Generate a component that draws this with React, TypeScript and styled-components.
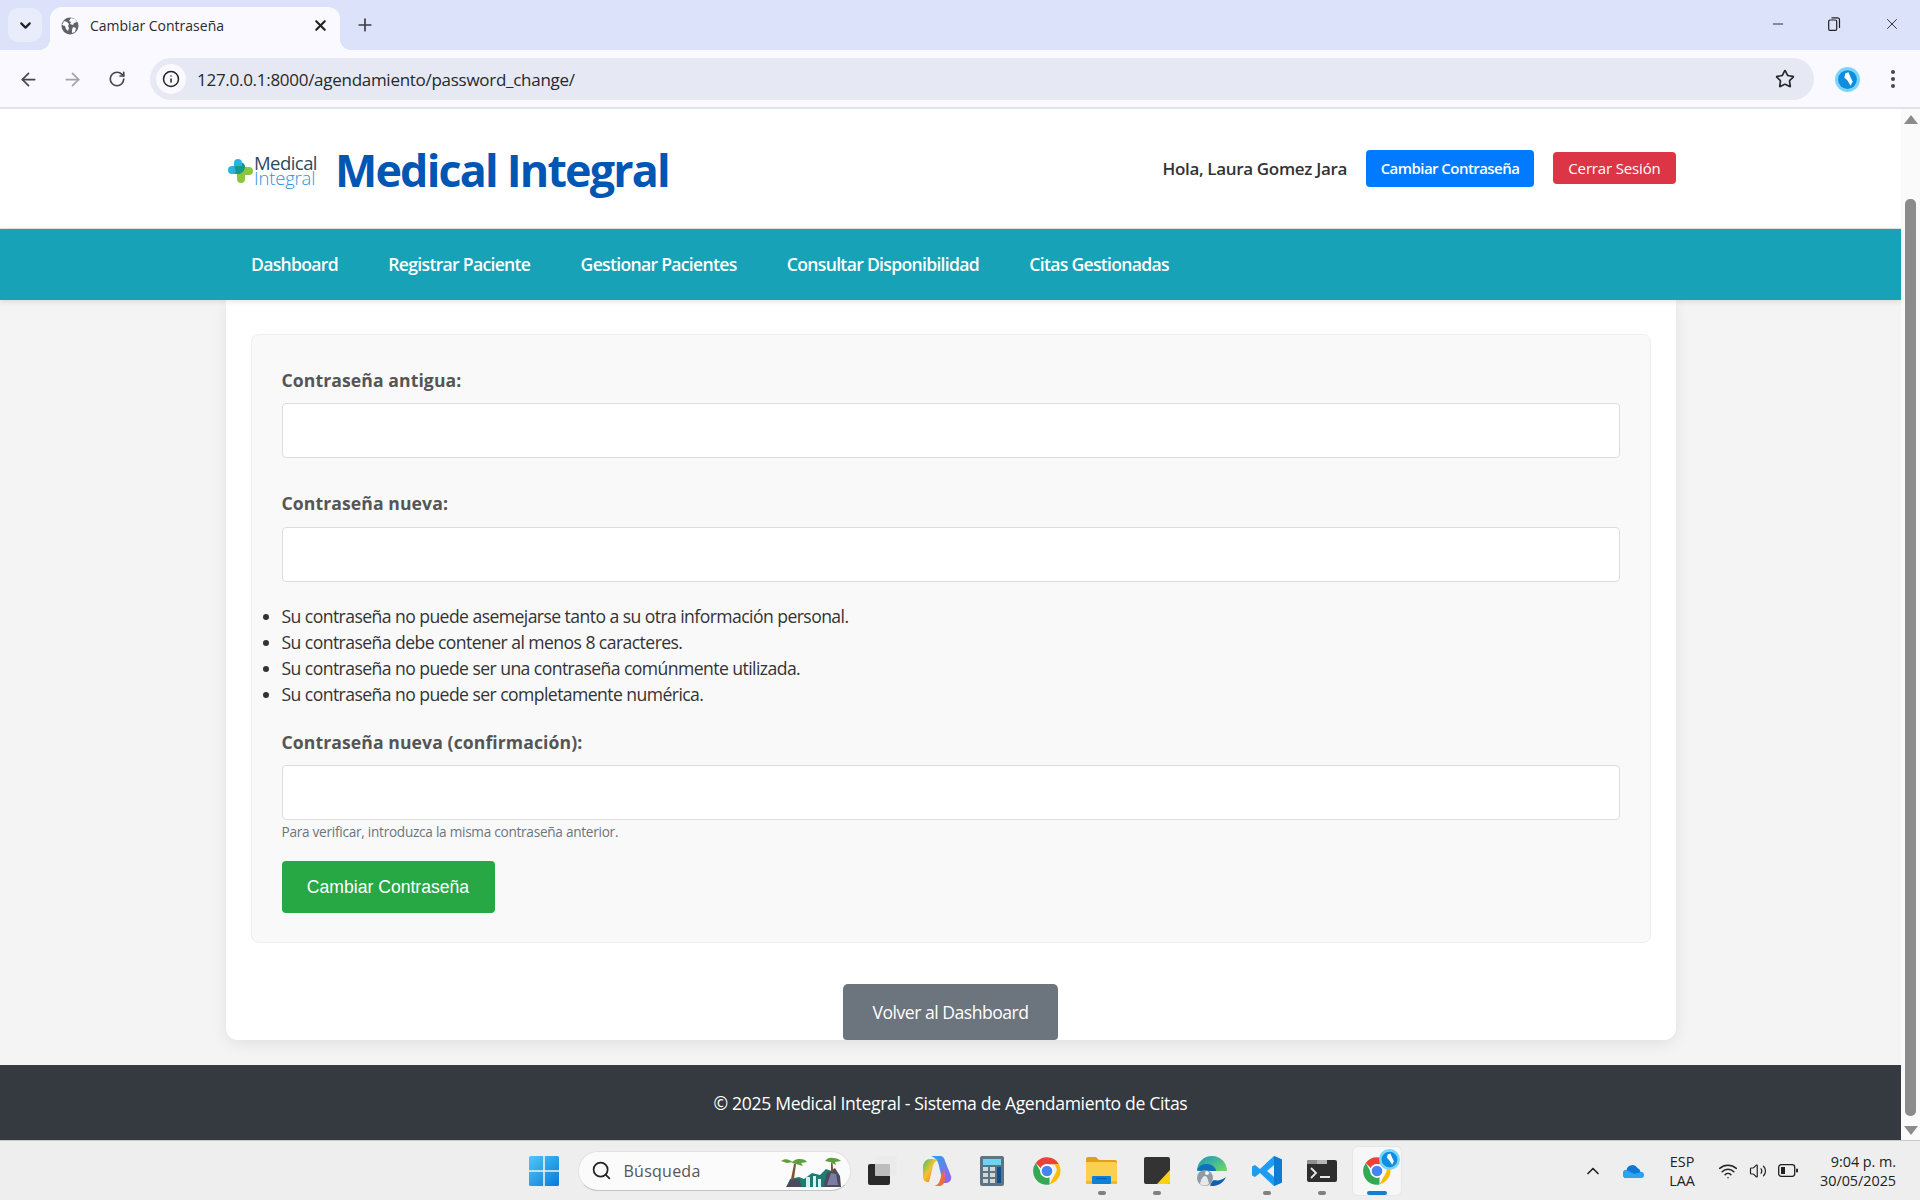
import React from "react";
import styled, { createGlobalStyle } from "styled-components";
import { ArrowLeft, ArrowRight, ChevronDown, ChevronUp, Info, Minus, Plus, RotateCw, Search, Star, Volume2, Wifi, X } from "lucide-react";

const GlobalStyle = createGlobalStyle`
  html, body { margin: 0; padding: 0; height: 100%; overflow: hidden; }
  * { box-sizing: border-box; }
  body { font-family: "Open Sans", "Noto Sans", sans-serif; color: #333; background: #f4f4f4; }
`;

const Frame = styled.div`
  width: 1920px;
  height: 1200px;
  display: flex;
  flex-direction: column;
  overflow: hidden;
`;

const TabStrip = styled.div`
  height: 50px;
  flex-shrink: 0;
  background: #dbe2f9;
  display: flex;
  align-items: flex-end;
  padding-left: 8px;
`;

const TabSearch = styled.div`
  width: 34px;
  height: 34px;
  margin-bottom: 8px;
  margin-right: 8px;
  border-radius: 10px;
  background: #e8ecfb;
  display: flex;
  align-items: center;
  justify-content: center;
  color: #222;
`;

const Tab = styled.div`
  width: 290px;
  height: 43px;
  background: #f9f9ff;
  border-radius: 12px 12px 0 0;
  display: flex;
  align-items: center;
  padding: 0 11px 6px 11px;
  gap: 11px;
  font-size: 14px;
  color: #2b2b2b;
  position: relative;

  &::before,
  &::after {
    content: "";
    position: absolute;
    bottom: 0;
    width: 12px;
    height: 12px;
  }
  &::before {
    left: -12px;
    background: radial-gradient(circle at 0 0, #dbe2f9 12px, #f9f9ff 12.5px);
  }
  &::after {
    right: -12px;
    background: radial-gradient(circle at 100% 0, #dbe2f9 12px, #f9f9ff 12.5px);
  }
`;

const TabTitle = styled.span`
  flex: 1;
`;

const NewTab = styled.div`
  width: 36px;
  height: 36px;
  margin-left: 7px;
  margin-bottom: 7px;
  display: flex;
  align-items: center;
  justify-content: center;
  color: #3a3d45;
`;

const WindowControls = styled.div`
  margin-left: auto;
  height: 50px;
  display: flex;
  align-items: center;
  gap: 42px;
  padding-right: 19px;
  padding-bottom: 2px;
  color: #222;
`;

const Toolbar = styled.div`
  height: 59px;
  flex-shrink: 0;
  background: #f9f9ff;
  border-bottom: 2px solid #dfe3ee;
  display: flex;
  align-items: center;
  padding: 1px 0 0 16px;
  position: relative;
`;

const NavIcon = styled.div<{ $faded?: boolean }>`
  width: 24px;
  height: 24px;
  margin-right: 20.5px;
  display: flex;
  align-items: center;
  justify-content: center;
  color: ${(p) => (p.$faded ? "#a0a3ab" : "#44474e")};
`;

const Omnibox = styled.div`
  width: 1664px;
  height: 42px;
  margin-left: 0.5px;
  border-radius: 21px;
  background: #e6e8f3;
  display: flex;
  align-items: center;
  padding-left: 6px;
  padding-right: 19px;
  font-size: 17px;
  color: #26282d;
  letter-spacing: -0.28px;
`;

const InfoChip = styled.div`
  width: 30px;
  height: 30px;
  border-radius: 50%;
  background: #f9f9ff;
  display: flex;
  align-items: center;
  justify-content: center;
  margin-right: 11px;
  color: #222;
`;

const Url = styled.span`
  flex: 1;
`;

const ToolbarEnd = styled.div`
  display: flex;
  align-items: center;
  gap: 31px;
  margin-left: 21px;
  color: #44474e;
`;

const Viewport = styled.div`
  flex: 1;
  min-height: 0;
  display: flex;
  overflow: hidden;
`;

const Page = styled.div`
  width: 1901px;
  display: flex;
  flex-direction: column;
  background: #f4f4f4;
`;

const Scrollbar = styled.div`
  width: 19px;
  background: #fafafa;
  display: flex;
  flex-direction: column;
  align-items: center;
  padding: 6px 0 5px;
`;

const ScrollThumb = styled.div`
  width: 11px;
  flex: 1;
  margin: 75px 0 10px;
  border-radius: 5px;
  background: #8b8b8b;
`;

const ScrollArrow = styled.div<{ $down?: boolean }>`
  width: 0;
  height: 0;
  border-left: 7px solid transparent;
  border-right: 7px solid transparent;
  ${(p) => (p.$down ? "border-top: 9px solid #8b8b8b;" : "border-bottom: 9px solid #8b8b8b;")}
`;

const Header = styled.header`
  height: 120px;
  flex-shrink: 0;
  background: #fff;
  border-bottom: 1px solid #e5e5e5;
  padding: 0 225px 0 226px;
  display: flex;
  align-items: center;
  justify-content: space-between;
`;

const Brand = styled.div`
  display: flex;
  align-items: center;
  gap: 18px;
  margin-top: 2px;
  margin-left: 2px;
`;

const LogoMark = styled.div`
  display: flex;
  align-items: center;
`;

const LogoText = styled.div`
  font-size: 18.5px;
  line-height: 15px;
  letter-spacing: -0.55px;
  color: #2c4a5e;
  margin-left: 1px;
`;

const LogoSecond = styled.div`
  color: #2f93dd;
  font-weight: 300;
  letter-spacing: -0.2px;
`;

const Title = styled.h1`
  margin: 0;
  font-size: 44.8px;
  font-weight: 700;
  color: #0056b3;
  letter-spacing: -1.8px;
`;

const UserArea = styled.div`
  display: flex;
  align-items: center;
  margin-top: -1px;
`;

const Greeting = styled.span`
  font-size: 17px;
  font-weight: 600;
  color: #333;
  letter-spacing: -0.33px;
  margin-right: 19px;
`;

const SmallButton = styled.a<{ $color: string; $width: number; $height: number; $strong?: boolean }>`
  background: ${(p) => p.$color};
  color: #fff;
  font-size: 15px;
  font-weight: ${(p) => (p.$strong ? 600 : 400)};
  letter-spacing: ${(p) => (p.$strong ? "-0.55px" : "-0.15px")};
  border-radius: 4px;
  width: ${(p) => p.$width}px;
  height: ${(p) => p.$height}px;
  display: flex;
  align-items: center;
  justify-content: center;
  margin-right: 19px;
  &:last-child { margin-right: 0; }
`;

const NavBar = styled.nav`
  height: 71px;
  flex-shrink: 0;
  background: #17a2b8;
  padding: 0 251px 2px;
  display: flex;
  align-items: center;
  gap: 50.3px;
  box-shadow: 0 2px 5px rgba(0, 0, 0, 0.1);
  position: relative;
`;

const NavLink = styled.a`
  color: #fff;
  font-size: 17.6px;
  font-weight: 600;
  letter-spacing: -0.7px;
`;

const Main = styled.main`
  flex: 1;
  min-height: 0;
  display: flex;
  flex-direction: column;
  align-items: center;
  padding-bottom: 25px;
`;

const Card = styled.div`
  width: 1450px;
  flex: 1;
  background: #fff;
  border-radius: 0 0 12px 12px;
  box-shadow: 0 4px 15px rgba(0, 0, 0, 0.08);
  padding: 34px 25px 0;
  display: flex;
  flex-direction: column;
  align-items: center;
`;

const FormPanel = styled.form`
  width: 1400px;
  height: 609px;
  background: #f9f9f9;
  border: 1px solid #eee;
  border-radius: 8px;
  padding: 33px 30px 0;
`;

const Field = styled.div<{ $gap: number }>`
  margin-bottom: ${(p) => p.$gap}px;
`;

const Label = styled.label<{ $after?: number }>`
  display: block;
  font-size: 17.6px;
  font-weight: 700;
  color: #555;
  line-height: 24px;
  margin-bottom: ${(p) => p.$after ?? 11}px;
  letter-spacing: 0.09px;
`;

const Input = styled.input`
  display: block;
  width: 100%;
  height: 55px;
  background: #fff;
  border: 1px solid #ddd;
  border-radius: 4px;
`;

const Hints = styled.ul`
  margin: 0 0 23px;
  padding: 0;
  list-style-position: outside;
  font-size: 17.6px;
  line-height: 26px;
  color: #333;
  letter-spacing: -0.57px;
`;

const Helper = styled.small`
  display: block;
  margin-top: 3px;
  font-size: 13.6px;
  line-height: 18px;
  color: #6c757d;
  letter-spacing: -0.26px;
`;

const SubmitButton = styled.button`
  display: block;
  margin-top: 20px;
  width: 213px;
  height: 52px;
  border: none;
  border-radius: 4px;
  background: #28a745;
  color: #fff;
  font-family: "Liberation Sans", Arial, sans-serif;
  font-size: 17.6px;
`;

const BackButton = styled.a`
  margin-top: auto;
  width: 215px;
  height: 56px;
  background: #6c757d;
  color: #fff;
  font-size: 17.6px;
  letter-spacing: -0.5px;
  border-radius: 5px 5px 4px 4px;
  display: flex;
  align-items: center;
  justify-content: center;
`;

const Footer = styled.footer`
  height: 75px;
  flex-shrink: 0;
  background: #343a40;
  color: #fff;
  font-size: 17.6px;
  letter-spacing: -0.35px;
  display: flex;
  align-items: center;
  justify-content: center;
`;

const Taskbar = styled.div`
  height: 60px;
  flex-shrink: 0;
  background: #eeeeee;
  border-top: 1px solid #c8c8c8;
  display: flex;
  align-items: center;
  padding-right: 24px;
`;

const TaskCenter = styled.div`
  display: flex;
  align-items: center;
  margin-left: 516.5px;
`;

const TaskSlot = styled.div<{ $active?: boolean }>`
  width: ${(p) => (p.$active ? "48px" : "55px")};
  margin: ${(p) => (p.$active ? "0 3.5px" : "0")};
  height: 48px;
  border-radius: 5px;
  display: flex;
  align-items: center;
  justify-content: center;
  position: relative;
  background: ${(p) => (p.$active ? "#f7f7f7" : "transparent")};
  ${(p) => (p.$active ? "box-shadow: 0 0 0 1px #e6e6e6;" : "")}
`;

const RunDot = styled.span<{ $active?: boolean }>`
  position: absolute;
  bottom: 0;
  left: 50%;
  transform: translateX(-50%);
  width: ${(p) => (p.$active ? "20px" : "8px")};
  height: 4px;
  border-radius: 2px;
  background: ${(p) => (p.$active ? "#0f7fd8" : "#808080")};
`;

const AppBadge = styled.span`
  position: absolute;
  top: 2px;
  right: 1px;
  display: flex;
`;

const SearchPill = styled.div`
  width: 273px;
  height: 40px;
  border-radius: 20px;
  background: #fbfbfb;
  border: 1px solid #e2e2e2;
  border-bottom-color: #c4c4c4;
  display: flex;
  align-items: center;
  padding: 0 7px 0 12px;
  margin: 0 3.5px 0 6px;
  font-size: 16px;
  color: #555;
  gap: 12px;
`;

const SearchLabel = styled.span`
  flex: 1;
  letter-spacing: 0.25px;
`;

const Tray = styled.div`
  margin-left: auto;
  display: flex;
  align-items: center;
  color: #222;
`;

const TrayGroup = styled.div`
  display: flex;
  align-items: center;
  gap: 11px;
`;

const TrayOneDrive = styled.div`
  display: flex;
  margin: 0 18px 0 20px;
`;

const Lang = styled.div`
  font-size: 14.4px;
  line-height: 19.5px;
  text-align: center;
  width: 40px;
  margin-right: 16px;
  margin-top: 1px;
`;

const Clock = styled.div`
  font-size: 14.4px;
  line-height: 19.5px;
  text-align: right;
  letter-spacing: -0.05px;
  margin-left: 22px;
  margin-top: 1px;
`;

const Globe = () => (
  <svg width="18" height="18" viewBox="0 0 18 18">
    <circle cx="9" cy="9" r="8.5" fill="#5f6368" />
    <path d="M3 4l3 1 2 2-1 2 1 2-1 3-2-2-1-3-3-1zM10 1l4 1 2 3-3 1-1 2-3-1 1-2-2-1zM12 10l3 1-1 4-3 1 0-3z" fill="#f9f9ff" />
  </svg>
);

const Restore = () => (
  <svg width="13" height="14" viewBox="0 0 13 14" fill="none" stroke="#222" strokeWidth="1.200">
    <rect x="0.700" y="3" width="8" height="10.300" rx="1.300" />
    <path d="M3.500 0.800h6a2 2 0 0 1 2 2V11" />
  </svg>
);

const ProfileBadge = ({ size = 25 }: { size?: number }) => (
  <svg width={size} height={size} viewBox="0 0 24 24">
    <circle cx="12" cy="12" r="12" fill="#7bd4fa" />
    <circle cx="12" cy="12" r="9" fill="#0f8ee0" />
    <path d="M10 6l3-1 2 5 2 4-2 4-3-5-3-3z" fill="#fff" />
  </svg>
);

const LogoCross = () => (
  <svg width="25" height="26" viewBox="0 0 25 26">
    <path d="M6 6a4 4 0 0 1 8 0v3H4a4 4 0 0 0-4 4 4 4 0 0 0 4 4h5v-5l-3-3z" fill="#2bb3e0" />
    <path d="M9 9h5V6a4 4 0 0 1 3 4v0h4a4 4 0 0 1 0 8h-4v4a4 4 0 0 1-8 0v-5H6a4 4 0 0 1 0-1h3z" fill="#8cc63f" />
    <path d="M6 9h8V5.500c2 1 3 2.500 3 4.500 0 3-2 5-5 7H6c3-2 1-6 0-8z" fill="#139a8a" />
  </svg>
);

const WinLogo = () => (
  <svg width="30" height="30" viewBox="0 0 30 30">
    <defs>
      <linearGradient id="win" x1="0" y1="0" x2="1" y2="1">
        <stop offset="0" stopColor="#4cc9f5" />
        <stop offset="1" stopColor="#0a78d7" />
      </linearGradient>
    </defs>
    <path d="M0 1.500A1.500 1.500 0 0 1 1.500 0h12.700v14.200H0zM15.800 0h12.700A1.500 1.500 0 0 1 30 1.500v12.700H15.800zM0 15.800h14.200V30H1.500A1.500 1.500 0 0 1 0 28.500zM15.800 15.800H30v12.700a1.500 1.500 0 0 1-1.500 1.500H15.800z" fill="url(#win)" />
  </svg>
);

const Scenery = () => (
  <svg width="62" height="32" viewBox="0 0 62 32">
    <path d="M6 32l3-8 9-2 5 2 8-6 8 2 6-6 8 3 4 6 1 9z" fill="#1f7a72" />
    <path d="M5 32l4-7 9-1 3 8zM42 32l4-14 8-5 5 8 1 11z" fill="#4a4c5e" />
    <path d="M46 30l4-12 5 1 2 11z" fill="#7c7da6" />
    <path d="M25 22h4v10h-4zM32 21h3v11h-3zM37 24h3v8h-3z" fill="#d4f1f1" />
    <path d="M10 24l3-15 2 0-2 15zM50 17l0-9 1.500 0 1 9z" fill="#7a5634" />
    <path d="M11 8c2-4 6-4 8-4 3 0 6 1 7 3l-6 1 2 3-7-2zM0 6c3-2 6-2 8-1l4 2-6 1zM44 6c2-3 5-4 8-3 3 0 6 1 8 3l-6 1 1 3-6-3z" fill="#5b9f3c" />
  </svg>
);

const TaskView = () => (
  <svg width="30" height="29" viewBox="0 0 30 29">
    <rect x="1" y="8" width="22" height="21" rx="2" fill="#2a2a2a" />
    <rect x="8" y="0" width="22" height="20" rx="2" fill="#ebebeb" />
    <rect x="8" y="8" width="15" height="12" rx="1" fill="#bdbdbd" />
  </svg>
);

const Copilot = () => (
  <svg width="30" height="32" viewBox="0 0 30 32">
    <defs>
      <linearGradient id="cpa" x1="0" y1="0" x2="1" y2="1">
        <stop offset="0" stopColor="#1fa8ee" />
        <stop offset="1" stopColor="#a35ce6" />
      </linearGradient>
      <linearGradient id="cpb" x1="0" y1="0" x2="1" y2="1">
        <stop offset="0" stopColor="#3fbf6a" />
        <stop offset="0.45" stopColor="#f2c230" />
        <stop offset="1" stopColor="#ee5f3a" />
      </linearGradient>
    </defs>
    <path d="M9 1h9c3 0 4.500 2 5 5l6 15c1 3-1 7-5 7h-3l-4-17C16 6 14 3 9 1z" fill="url(#cpa)" />
    <path d="M8 4C4 4 2 7 1 11v11c0 3 2 5 5 5h1l4-16c1-3 2-5 5-6-2-1-5-1-8-1z" fill="url(#cpb)" />
    <path d="M6 31h9c3 0 5-2 6-6l2-11c0 5 0 10-1 13 0 2-3 4-6 4z" fill="#e86ab4" />
    <path d="M11 31c3 0 6-2 7-6l3-10 2 9c0 4-3 7-6 7z" fill="#ee6d3a" />
  </svg>
);

const Calculator = () => (
  <svg width="24" height="30" viewBox="0 0 24 30">
    <rect width="24" height="30" rx="2" fill="#5f7482" />
    <rect x="3" y="3" width="18" height="6" fill="#6fd3f2" />
    <path d="M3 11h5v4H3zM10 11h5v4h-5zM3 17h5v4H3zM10 17h5v4h-5zM3 23h5v4H3zM10 23h5v4h-5z" fill="#cfd8dd" />
    <rect x="17" y="11" width="4" height="16" fill="#0f4f8f" />
  </svg>
);

const Chrome = ({ size = 30 }: { size?: number }) => (
  <svg width={size} height={size} viewBox="0 0 48 48">
    <path d="M24 2a22 22 0 0 1 19 11H24a11 11 0 0 0-10 6L6 11A22 22 0 0 1 24 2z" fill="#ea4335" />
    <path d="M43 13a22 22 0 0 1-15 32l9-16a11 11 0 0 0-2-16z" fill="#fbbc04" />
    <path d="M28 45.600A22 22 0 0 1 6 11l9 16a11 11 0 0 0 13 6z" fill="#34a853" />
    <circle cx="24" cy="24" r="11" fill="#fff" />
    <circle cx="24" cy="24" r="8.500" fill="#4285f4" />
  </svg>
);

const Folder = () => (
  <svg width="31" height="27" viewBox="0 0 31 27">
    <path d="M0 2a2 2 0 0 1 2-2h8l3 3h16a2 2 0 0 1 2 2v4H0z" fill="#e0a01b" />
    <path d="M0 5h29a2 2 0 0 1 2 2v18a2 2 0 0 1-2 2H2a2 2 0 0 1-2-2z" fill="#fcd04f" />
    <rect y="24" width="31" height="3" fill="#f2b92f" />
    <rect x="6" y="19" width="19" height="8" rx="1" fill="#0f7fd8" />
    <rect x="10" y="21" width="11" height="1.200" fill="#0b5fa8" />
  </svg>
);

const Sticky = () => (
  <svg width="26" height="27" viewBox="0 0 26 27">
    <rect width="26" height="27" rx="2" fill="#333" />
    <path d="M26 13v12a2 2 0 0 1-2 2H13z" fill="#fcd116" />
  </svg>
);

const Edge = () => (
  <svg width="30" height="30" viewBox="0 0 30 30">
    <defs>
      <linearGradient id="edg" x1="0" y1="0" x2="1" y2="0.800">
        <stop offset="0" stopColor="#1593c9" />
        <stop offset="1" stopColor="#6ed36b" />
      </linearGradient>
    </defs>
    <path d="M0 15C0 6 7 0 15 0c9 0 15 7 15 15H12C8 15 2 15 0 15z" fill="url(#edg)" />
    <path d="M0 14c2-5 6-6 10-6 4 0 9 3 9 7H8c-4 0-6 0-8-1z" fill="#0f70c0" />
    <path d="M13 30c8 1 14-4 16-9-4 3-8 4-12 3-2 1-3 3-4 6z" fill="#0f62b0" />
    <circle cx="8" cy="22" r="8" fill="#8e9ba6" />
    <path d="M3 28c1-5 3-8 5-8s3 3 4 8c-3 2-6 2-9 0z" fill="#e6e8ea" />
    <circle cx="10" cy="17" r="2" fill="#f4f4f4" />
  </svg>
);

const VsCode = () => (
  <svg width="30" height="30" viewBox="0 0 30 30">
    <path d="M22 0l8 3.500v23L22 30 8 17l-5 4-3-1.500v-9L3 9l5 4z" fill="#1f9cf0" />
    <path d="M22 0l8 3.500v23L22 30z" fill="#0d7cd4" />
    <path d="M22 9v12l-7-6z" fill="#eeeeee" />
  </svg>
);

const Terminal = () => (
  <svg width="30" height="22" viewBox="0 0 30 22">
    <rect width="30" height="22" rx="2" fill="#2e2e2e" />
    <path d="M2 0h8v4H0V2a2 2 0 0 1 2-2z" fill="#8f8f8f" />
    <rect x="10" width="10" height="4" fill="#b5b5b5" />
    <path d="M4 8l5 5-5 5" fill="none" stroke="#e8e8e8" strokeWidth="1.800" />
    <path d="M13 17h10" stroke="#e8e8e8" strokeWidth="2" />
  </svg>
);

const OneDrive = () => (
  <svg width="21" height="14" viewBox="0 0 21 14">
    <path d="M4 14a4 4 0 0 1-.5-8 6 6 0 0 1 11-2 5 5 0 0 1 3 4 3 3 0 0 1 0 6z" fill="#0f78d4" />
    <path d="M4 14a4 4 0 0 1-.5-8l8 4 6.500-2a3 3 0 0 1 0 6z" fill="#2ba4ee" />
  </svg>
);

const Battery = () => (
  <svg width="20" height="13" viewBox="0 0 20 13">
    <rect x="0.700" y="0.700" width="16" height="11.600" rx="2.500" fill="none" stroke="#222" strokeWidth="1.300" />
    <rect x="3" y="3" width="4" height="7" fill="#222" />
    <rect x="18" y="4.500" width="2" height="4" rx="1" fill="#222" />
  </svg>
);

const navItems = ["Dashboard", "Registrar Paciente", "Gestionar Pacientes", "Consultar Disponibilidad", "Citas Gestionadas"];

const hints = [
  "Su contraseña no puede asemejarse tanto a su otra información personal.",
  "Su contraseña debe contener al menos 8 caracteres.",
  "Su contraseña no puede ser una contraseña comúnmente utilizada.",
  "Su contraseña no puede ser completamente numérica.",
];

export default function App() {
  return (
    <Frame>
      <GlobalStyle />
      <TabStrip>
        <TabSearch>
          <ChevronDown size={17} strokeWidth={3} />
        </TabSearch>
        <Tab>
          <Globe />
          <TabTitle>Cambiar Contraseña</TabTitle>
          <X size={17} strokeWidth={3} color="#222" />
        </Tab>
        <NewTab>
          <Plus size={20} strokeWidth={2} />
        </NewTab>
        <WindowControls>
          <Minus size={16} strokeWidth={1.4} />
          <Restore />
          <X size={18} strokeWidth={1.2} />
        </WindowControls>
      </TabStrip>
      <Toolbar>
        <NavIcon>
          <ArrowLeft size={21} strokeWidth={2} />
        </NavIcon>
        <NavIcon $faded>
          <ArrowRight size={21} strokeWidth={2} />
        </NavIcon>
        <NavIcon>
          <RotateCw size={18} strokeWidth={2.2} />
        </NavIcon>
        <Omnibox>
          <InfoChip>
            <Info size={18} strokeWidth={2} />
          </InfoChip>
          <Url>127.0.0.1:8000/agendamiento/password_change/</Url>
          <Star size={20} strokeWidth={2} />
        </Omnibox>
        <ToolbarEnd>
          <ProfileBadge />
          <svg width="4" height="18" viewBox="0 0 4 18" fill="#44474e">
            <circle cx="2" cy="2" r="2" />
            <circle cx="2" cy="9" r="2" />
            <circle cx="2" cy="16" r="2" />
          </svg>
        </ToolbarEnd>
      </Toolbar>
      <Viewport>
        <Page>
          <Header>
            <Brand>
              <LogoMark>
                <LogoCross />
                <LogoText>
                  Medical
                  <LogoSecond>Integral</LogoSecond>
                </LogoText>
              </LogoMark>
              <Title>Medical Integral</Title>
            </Brand>
            <UserArea>
              <Greeting>Hola, Laura Gomez Jara</Greeting>
              <SmallButton $color="#007bff" $width={168} $height={37} $strong>Cambiar Contraseña</SmallButton>
              <SmallButton $color="#dc3545" $width={123} $height={32}>Cerrar Sesión</SmallButton>
            </UserArea>
          </Header>
          <NavBar>
            {navItems.map((item) => (
              <NavLink key={item}>{item}</NavLink>
            ))}
          </NavBar>
          <Main>
            <Card>
              <FormPanel>
                <Field $gap={33}>
                  <Label>Contraseña antigua:</Label>
                  <Input type="password" />
                </Field>
                <Field $gap={21}>
                  <Label $after={12}>Contraseña nueva:</Label>
                  <Input type="password" />
                </Field>
                <Hints>
                  {hints.map((hint) => (
                    <li key={hint}>{hint}</li>
                  ))}
                </Hints>
                <Field $gap={0}>
                  <Label>Contraseña nueva (confirmación):</Label>
                  <Input type="password" />
                  <Helper>Para verificar, introduzca la misma contraseña anterior.</Helper>
                </Field>
                <SubmitButton type="button">Cambiar Contraseña</SubmitButton>
              </FormPanel>
              <BackButton>Volver al Dashboard</BackButton>
            </Card>
          </Main>
          <Footer>© 2025 Medical Integral - Sistema de Agendamiento de Citas</Footer>
        </Page>
        <Scrollbar>
          <ScrollArrow />
          <ScrollThumb />
          <ScrollArrow $down />
        </Scrollbar>
      </Viewport>
      <Taskbar>
        <TaskCenter>
          <TaskSlot><WinLogo /></TaskSlot>
          <SearchPill>
            <Search size={21} strokeWidth={2} color="#222" />
            <SearchLabel>Búsqueda</SearchLabel>
            <Scenery />
          </SearchPill>
          <TaskSlot><TaskView /></TaskSlot>
          <TaskSlot><Copilot /></TaskSlot>
          <TaskSlot><Calculator /></TaskSlot>
          <TaskSlot><Chrome /></TaskSlot>
          <TaskSlot><Folder /><RunDot /></TaskSlot>
          <TaskSlot><Sticky /><RunDot /></TaskSlot>
          <TaskSlot><Edge /></TaskSlot>
          <TaskSlot><VsCode /><RunDot /></TaskSlot>
          <TaskSlot><Terminal /><RunDot /></TaskSlot>
          <TaskSlot $active>
            <Chrome />
            <AppBadge><ProfileBadge size={21} /></AppBadge>
            <RunDot $active />
          </TaskSlot>
        </TaskCenter>
        <Tray>
          <ChevronUp size={20} strokeWidth={2} />
          <TrayOneDrive>
            <OneDrive />
          </TrayOneDrive>
          <Lang>ESP<br />LAA</Lang>
          <TrayGroup>
            <Wifi size={20} strokeWidth={1.8} />
            <Volume2 size={18} strokeWidth={1.6} />
            <Battery />
          </TrayGroup>
          <Clock>9:04 p. m.<br />30/05/2025</Clock>
        </Tray>
      </Taskbar>
    </Frame>
  );
}
